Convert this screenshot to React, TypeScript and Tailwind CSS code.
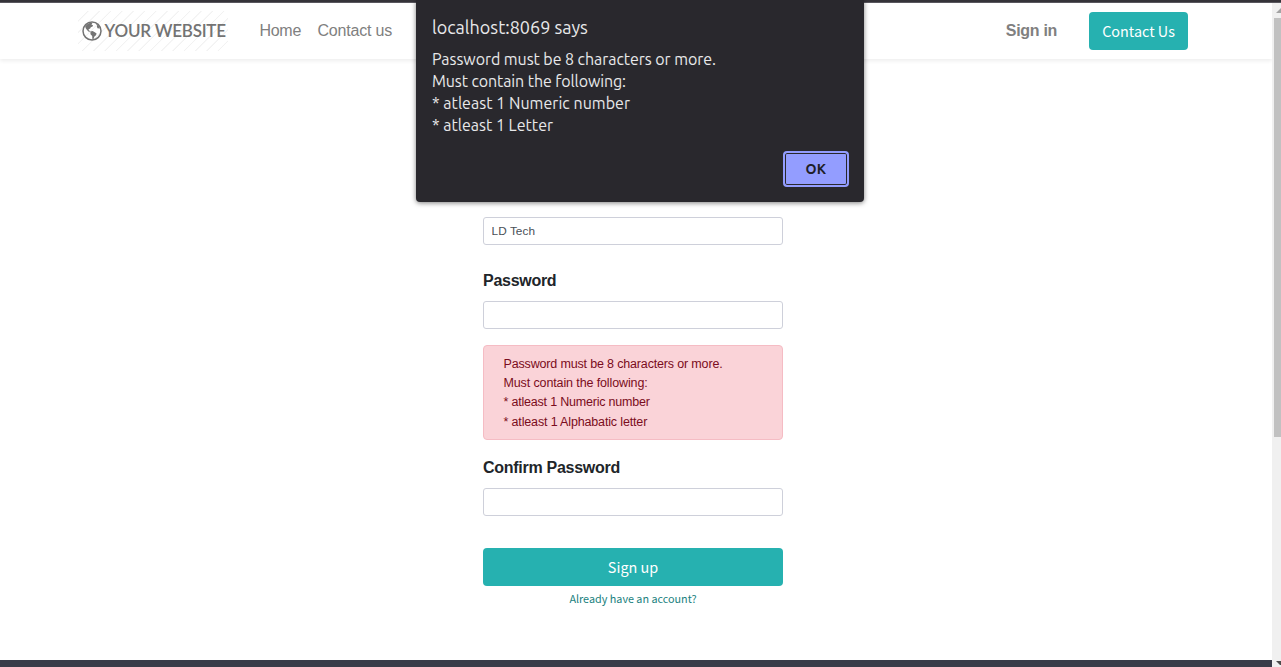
import { useState } from "react";

const sans = "font-['Liberation_Sans',Arial,sans-serif]";
const source = "font-['Noto_Sans_CJK_SC',sans-serif]";

function GlobeIcon() {
  return (
    <svg viewBox="0 0 20 20" className="h-5 w-5 shrink-0" fill="currentColor">
      <circle cx="10" cy="10" r="9" fill="none" stroke="currentColor" strokeWidth="1.5" />
      <path d="M3.2 5.2 5.8 2.8 9 1.5 10.4 2.3 9.4 3.4 11 4.2 10.6 5.6 8.8 6.2 8.2 7.6 6.6 8.3 6.9 9.4 8.4 10.1 8.2 10.8 6.4 10.4 4.6 8.6 3.6 6.9Z" />
      <path d="M8.4 10.6 10.6 10 12.8 11.2 14.6 12.4 14 14.3 12.4 15.4 11.4 18.2 10.3 17.8 10.2 15 8.5 13.2Z" />
      <path d="M13.4 2.6 16.4 4.6 18.2 7.8 17.2 7.2 15.8 7.4 14.8 5.8 15.2 4.6Z" />
    </svg>
  );
}

function Logo() {
  return (
    <a
      href="#"
      className="flex h-10 w-[150px] items-center pl-1 text-[#737373] bg-[repeating-linear-gradient(135deg,#fff_0px,#fff_6.5px,#f2f2f2_7px,#f2f2f2_7.5px,#fff_8px)]"
    >
      <GlobeIcon />
      <span className="ml-[2.5px] whitespace-nowrap font-['Lato',sans-serif] text-[17px] font-semibold leading-5 tracking-[-0.22px]">
        YOUR WEBSITE
      </span>
    </a>
  );
}

function Header() {
  return (
    <header className="flex h-14 shrink-0 items-start bg-white pl-[78px] pr-[84px] shadow-[0_2px_4px_rgba(0,0,0,0.07)]">
      <div className="mt-2">
        <Logo />
      </div>
      <nav className={`ml-[31.5px] mt-4 flex gap-4 text-base leading-6 text-[#808080] ${sans}`}>
        <a href="#" className="w-[42px] whitespace-nowrap tracking-[-0.3px]">Home</a>
        <a href="#" className="whitespace-nowrap tracking-[-0.2px]">Contact us</a>
      </nav>
      <div className="ml-auto flex">
        <a href="#" className={`mr-8 mt-4 text-base font-bold leading-6 text-[#808080] tracking-[-0.3px] ${sans}`}>
          Sign in
        </a>
        <a
          href="#"
          className={`mt-[9px] flex h-[38px] w-[99px] items-center justify-center whitespace-nowrap rounded bg-[#26b1b0] text-[14.4px] leading-6 text-white ${source}`}
        >
          Contact Us
        </a>
      </div>
    </header>
  );
}

function PasswordField({ label }: { label: string }) {
  return (
    <label className="block">
      <span className={`block text-base font-bold leading-6 text-[#212529] tracking-[-0.28px] ${sans}`}>{label}</span>
      <input
        type="password"
        className="mt-2 block h-7 w-full rounded-[3px] border border-[#ced0da] bg-white px-2 outline-none"
      />
    </label>
  );
}

function SignupForm() {
  return (
    <form className="ml-[483px] mt-[158px] w-[300px]" onSubmit={(e) => e.preventDefault()}>
      <input
        type="text"
        defaultValue="LD Tech"
        className={`mb-6 block h-7 w-full rounded-[3px] border border-[#ced0da] bg-white px-[7.5px] text-[11.8px] tracking-[0.08px] text-[#495057] outline-none ${sans}`}
      />
      <PasswordField label="Password" />
      <div
        className={`mb-4 mt-4 h-[95px] rounded border border-[#f5bcc4] bg-[#fad3d8] pl-[19.5px] pt-[8.6px] text-[12.5px] leading-[19.4px] text-[#7a0c20] ${sans}`}
      >
        <p className="tracking-[-0.16px]">Password must be 8 characters or more.</p>
        <p className="tracking-[-0.12px]">Must contain the following:</p>
        <p className="tracking-[-0.2px]">* atleast 1 Numeric number</p>
        <p className="tracking-[-0.15px]">* atleast 1 Alphabatic letter</p>
      </div>
      <PasswordField label="Confirm Password" />
      <button
        type="submit"
        className={`mt-8 flex h-[38px] w-full items-center justify-center rounded bg-[#26b1b0] text-[14.4px] leading-6 text-white ${source}`}
      >
        Sign up
      </button>
      <a href="#" className={`mt-[3px] block text-center text-[10.8px] leading-[18px] text-[#207f7e] ${source}`}>
        Already have an account?
      </a>
    </form>
  );
}

function AlertDialog({ onClose }: { onClose: () => void }) {
  return (
    <div
      role="alertdialog"
      className="absolute left-[416px] top-0 flex h-[202px] w-[448px] flex-col rounded-b bg-[#29282d] pl-4 pr-[15px] pt-[15px] font-['Ubuntu','Noto_Sans',sans-serif] text-[#e8e8ea] shadow-[0_1px_5px_rgba(0,0,0,0.5)]"
    >
      <h1 className="text-lg leading-6">localhost:8069 says</h1>
      <div className="mt-[9px] text-base leading-[22px]">
        <p className="tracking-[-0.06px]">Password must be 8 characters or more.</p>
        <p className="tracking-[-0.1px]">Must contain the following:</p>
        <p className="tracking-[0.03px]">* atleast 1 Numeric number</p>
        <p>* atleast 1 Letter</p>
      </div>
      <button
        onClick={onClose}
        className="ml-auto mt-[15px] flex h-9 w-[66px] items-center justify-center rounded border-2 border-[#939dff] bg-[#939dff] text-sm font-bold tracking-[0.4px] text-[#202027] shadow-[inset_0_0_0_1px_#29282d]"
      >
        OK
      </button>
    </div>
  );
}

function Scrollbar() {
  return (
    <div className="flex w-[9px] shrink-0 flex-col overflow-hidden bg-[#f0f0f0]">
      <svg className="h-[15px] w-[9px]" viewBox="0 0 9 15">
        <path d="M4 10 9 5V10Z" fill="#a3a3a3" />
      </svg>
      <div className="ml-0.5 h-[419px] bg-[#c1c1c1]" />
      <svg className="mt-auto h-4 w-[9px]" viewBox="0 0 9 16">
        <path d="M4 10H9V14H8Z" fill="#4c4c4c" />
      </svg>
    </div>
  );
}

export default function App() {
  const [open, setOpen] = useState(true);
  return (
    <div className="relative flex h-[667px] w-[1281px] flex-col overflow-hidden bg-white">
      <div className="h-[3px] shrink-0 border-b border-[#59575e] bg-[#353339]" />
      <div className="flex min-h-0 flex-1">
        <div className="flex min-w-0 flex-1 flex-col overflow-hidden">
          <Header />
          <SignupForm />
          <footer className="mt-auto h-[7px] shrink-0 bg-[#393b48]" />
        </div>
        <Scrollbar />
      </div>
      {open && <AlertDialog onClose={() => setOpen(false)} />}
    </div>
  );
}
